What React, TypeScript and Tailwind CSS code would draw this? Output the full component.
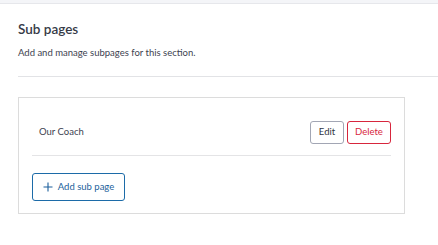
import React from 'react';

export default function App() {
  return (
    <div className="w-[438px] h-[245px] bg-white overflow-hidden" style={{ fontFamily: 'Lato, "Liberation Sans", sans-serif' }}>
      <div className="h-[4px] bg-[#f4f5f8] border-b border-[#e6e7eb]" />
      <div className="pl-[18px]">
        <h2 className="pt-[16px] text-[13.5px] leading-[18px] font-semibold text-[#363b47]">Sub pages</h2>
        <p className="mt-[8px] text-[9.5px] leading-[13px] text-[#3d4250]">Add and manage subpages for this section.</p>
        <div className="mt-[17px] border-t border-[#e2e3e6]" />
      </div>
      <div className="ml-[18px] mt-[20px] w-[387px] border border-[#dcdcdc] px-[13px] pt-[12px] pb-[12px]">
        <div className="flex items-center justify-between pt-[11px] pb-[11px] border-b border-[#e4e4e6]">
          <span className="pl-[7px] text-[9.5px] text-[#3d4250]">Our Coach</span>
          <div className="flex gap-[3px]">
            <button className="h-[23px] w-[34px] rounded-[3px] border border-[#a2a6b4] text-[9.5px] text-[#2f3442] bg-white">Edit</button>
            <button className="h-[23px] w-[44px] rounded-[3px] border border-[#d7263d] text-[9.5px] text-[#d7263d] bg-white">Delete</button>
          </div>
        </div>
        <button className="mt-[17px] h-[28px] w-[93px] rounded-[3px] border border-[#1c6ba8] flex items-center justify-center gap-[5px] text-[9.5px] text-[#1c5f9c] bg-white">
          <svg width="10" height="10" viewBox="0 0 10 10" fill="none" stroke="#1c5f9c" strokeWidth="1.1">
            <path d="M5 0.5v9M0.5 5h9" />
          </svg>
          Add sub page
        </button>
      </div>
    </div>
  );
}
